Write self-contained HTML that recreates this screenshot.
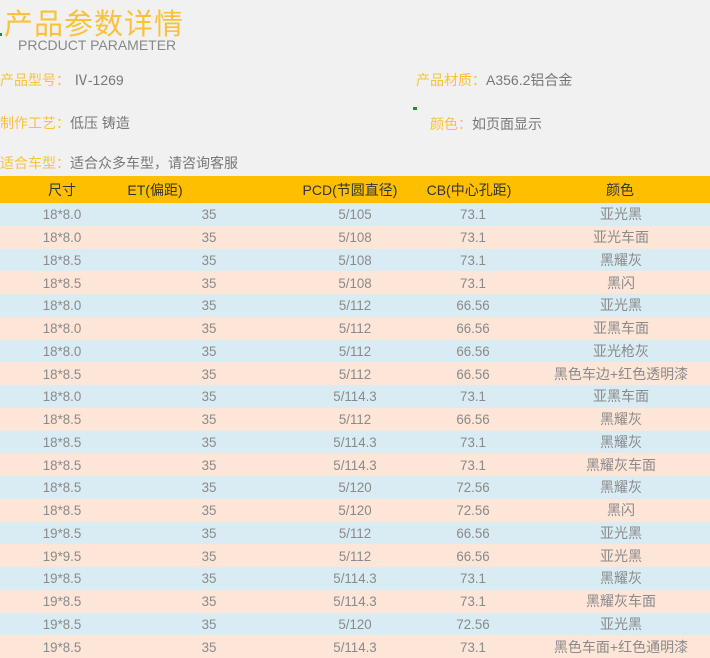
<!DOCTYPE html><html><head><meta charset="utf-8"><style>
body{margin:0;width:710px;height:658px;background:#f1f1f1;font-family:"Liberation Sans","Noto Sans CJK SC",sans-serif;position:relative;overflow:hidden}
.a{position:absolute;white-space:nowrap}
.y{color:#f8c23a}.g{color:#777}
.r{position:absolute;left:0;width:710px;height:22.75px;color:#8a8a8a;font-size:14px}
.r span,.h span{position:absolute;top:50%;transform:translate(-50%,-50%) scaleX(.95);white-space:nowrap}
.r span.c,.h span{transform:translate(-50%,-50%)}
.b{background:#d9ecf3}.p{background:#fde5d8}
.h{position:absolute;left:0;top:176px;width:710px;height:27px;background:#fdbf00;color:#333;font-size:14px}
</style></head><body>
<div class="a y" style="left:4px;top:1px;font-size:29px;letter-spacing:1px">产品参数详情</div>
<div class="a" style="left:0;top:33px;width:2px;height:3px;background:#2a8a2a"></div>
<div class="a" style="left:18px;top:37px;font-size:14px;color:#888">PRCDUCT PARAMETER</div>
<div class="a" style="left:0;top:70px;font-size:14px"><span class="y">产品型号：</span> <span class="g">Ⅳ-1269</span></div>
<div class="a" style="left:416px;top:70px;font-size:14px"><span class="y">产品材质：</span><span class="g">A356.2铝合金</span></div>
<div class="a" style="left:0;top:113px;font-size:14px"><span class="y">制作工艺：</span><span class="g">低压 铸造</span></div>
<div class="a" style="left:413px;top:107px;width:4px;height:3px;background:#2a8a2a"></div>
<div class="a" style="left:430px;top:114px;font-size:14px"><span class="y">颜色：</span><span class="g">如页面显示</span></div>
<div class="a" style="left:0;top:153px;font-size:14px"><span class="y">适合车型：</span><span class="g">适合众多车型，请咨询客服</span></div>
<div class="h"><span style="left:62px">尺寸</span><span style="left:155px">ET(偏距)</span><span style="left:350px">PCD(节圆直径)</span><span style="left:469px">CB(中心孔距)</span><span style="left:620px">颜色</span></div>
<div id="t"></div>
<script>
var d=[["18*8.0","5/105","73.1","亚光黑"],["18*8.0","5/108","73.1","亚光车面"],["18*8.5","5/108","73.1","黑耀灰"],["18*8.5","5/108","73.1","黑闪"],["18*8.0","5/112","66.56","亚光黑"],["18*8.0","5/112","66.56","亚黑车面"],["18*8.0","5/112","66.56","亚光枪灰"],["18*8.5","5/112","66.56","黑色车边+红色透明漆"],["18*8.0","5/114.3","73.1","亚黑车面"],["18*8.5","5/112","66.56","黑耀灰"],["18*8.5","5/114.3","73.1","黑耀灰"],["18*8.5","5/114.3","73.1","黑耀灰车面"],["18*8.5","5/120","72.56","黑耀灰"],["18*8.5","5/120","72.56","黑闪"],["19*8.5","5/112","66.56","亚光黑"],["19*9.5","5/112","66.56","亚光黑"],["19*8.5","5/114.3","73.1","黑耀灰"],["19*8.5","5/114.3","73.1","黑耀灰车面"],["19*8.5","5/120","72.56","亚光黑"],["19*8.5","5/114.3","73.1","黑色车面+红色通明漆"]];
var h="";d.forEach(function(r,i){h+='<div class="r '+(i%2?'p':'b')+'" style="top:'+(203+i*22.75)+'px"><span style="left:62px">'+r[0]+'</span><span style="left:209px">35</span><span style="left:355px">'+r[1]+'</span><span style="left:473px">'+r[2]+'</span><span class="c" style="left:621px">'+r[3]+'</span></div>'});
document.getElementById("t").innerHTML=h;
</script>
</body></html>
